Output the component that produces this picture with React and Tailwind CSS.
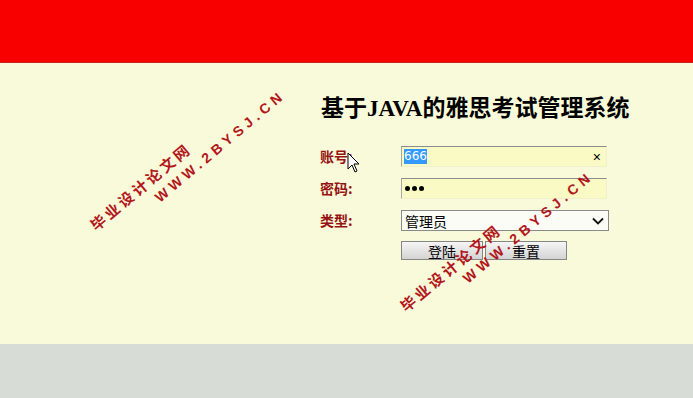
import React from "react";

const cjk = { fontFamily: '"Noto Sans CJK SC", "Liberation Sans", sans-serif' };

function Watermark({ x, y, text, wide }) {
  return (
    <div
      className={`absolute whitespace-nowrap leading-none font-bold text-[#b3161c] [transform:translate(-50%,-50%)_rotate(-40deg)] ${
        wide ? "text-[14px] tracking-[4.5px]" : "text-[15px] tracking-[3px]"
      }`}
      style={{ left: x, top: y, fontFamily: '"Liberation Sans", "Noto Sans CJK SC", sans-serif' }}
    >
      {text}
    </div>
  );
}

function Cursor() {
  return (
    <svg className="absolute left-[347px] top-[152px]" width="13" height="21" viewBox="0 0 13 21">
      <path d="M1 1 L1 17 L5 13 L8 20 L10 19 L7 12 L12 12 Z" fill="#fff" stroke="#000" strokeWidth="1" strokeLinejoin="miter" />
    </svg>
  );
}

export default function App() {
  return (
    <div className="relative min-h-screen bg-[#d8dcd7] overflow-hidden" style={cjk}>
      <div className="h-[63px] bg-[#f90000] border-b border-[#c92020]" />

      <div className="h-[281px] bg-[#f8fad9] pt-[31px]">
        <h1
          className="pl-[321px] text-[23px] leading-[30px] font-bold text-black"
          style={{ fontFamily: '"Liberation Serif", "Noto Sans CJK SC", serif' }}
        >
          基于JAVA的雅思考试管理系统
        </h1>

        <div className="pl-[320px] mt-[22px]">
          <div className="flex items-center h-[21px]">
            <label className="w-[81px] text-[14px] font-bold text-[#951313]">账号:</label>
            <div className="w-[206px] h-[21px] flex items-center justify-between pl-[2px] pr-[5px] bg-[#fafac4] border border-t-[#8c8c8c] border-l-[#a8a8a8] border-r-[#eef0cf] border-b-[#eef0cf]">
              <span
                className="bg-[#3399ff] text-white leading-[15px]"
                style={{ fontFamily: '"DejaVu Sans", sans-serif', fontSize: 12 }}
              >
                666
              </span>
              <span className="text-[14px] leading-none text-black" style={{ fontFamily: '"Liberation Sans", sans-serif' }}>
                ×
              </span>
            </div>
          </div>

          <div className="flex items-center h-[21px] mt-[11px]">
            <label className="w-[81px] text-[14px] font-bold text-[#951313]">密码:</label>
            <div className="w-[206px] h-[21px] flex items-center gap-[2px] pl-[3px] bg-[#fafac4] border border-t-[#8c8c8c] border-l-[#a8a8a8] border-r-[#eef0cf] border-b-[#eef0cf]">
              <span className="w-[5px] h-[5px] rounded-full bg-black" />
              <span className="w-[5px] h-[5px] rounded-full bg-black" />
              <span className="w-[5px] h-[5px] rounded-full bg-black" />
            </div>
          </div>

          <div className="flex items-center h-[21px] mt-[11px]">
            <label className="w-[81px] text-[14px] font-bold text-[#951313]">类型:</label>
            <div className="w-[208px] h-[21px] flex items-center justify-between pl-[3px] pr-[4px] bg-[#fbfcf6] border border-[#8a8a8a]">
              <span className="text-[14px] leading-none text-black">管理员</span>
              <svg width="12" height="8" viewBox="0 0 12 8">
                <path d="M1 1.5 L6 6.5 L11 1.5" fill="none" stroke="#111" strokeWidth="1.8" />
              </svg>
            </div>
          </div>

          <div className="flex h-[19px] mt-[10px] ml-[81px] gap-[2px]">
            <button className="w-[82px] h-[19px] text-[14px] leading-none text-black border border-[#858585] bg-gradient-to-b from-[#f6f6f6] to-[#d3d3d3]">
              登陆
            </button>
            <button className="w-[82px] h-[19px] text-[14px] leading-none text-black border border-[#858585] bg-gradient-to-b from-[#f6f6f6] to-[#d3d3d3]">
              重置
            </button>
          </div>
        </div>
      </div>

      <div className="h-[54px] bg-[#d8dcd7]" />

      <Watermark x={141} y={187} text="毕业设计论文网" />
      <Watermark x={220} y={146} text="WWW.2BYSJ.CN" wide />
      <Watermark x={451} y={268} text="毕业设计论文网" />
      <Watermark x={528} y={227} text="WWW.2BYSJ.CN" wide />
      <Cursor />
    </div>
  );
}
